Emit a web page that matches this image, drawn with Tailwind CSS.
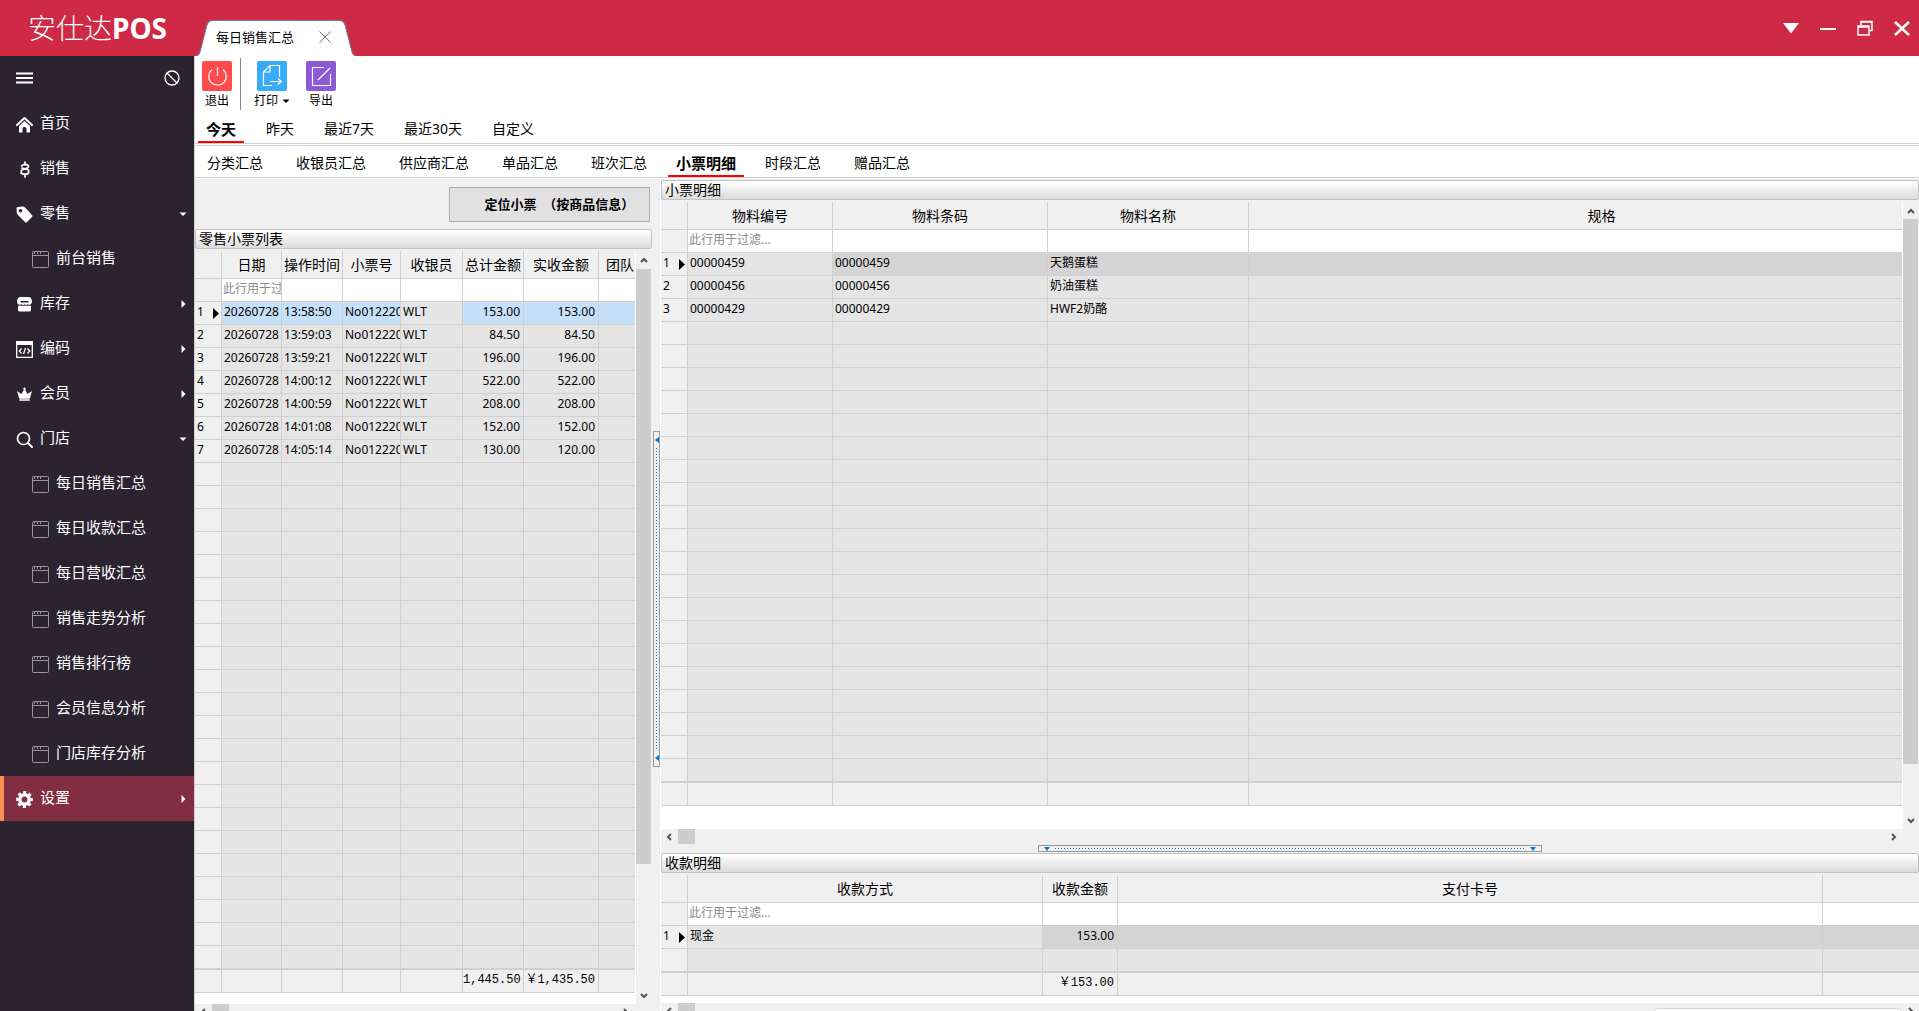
<!DOCTYPE html>
<html lang="zh-CN">
<head>
<meta charset="utf-8">
<title>安仕达POS</title>
<script src="https://cdn.jsdelivr.net/npm/@tailwindcss/browser@4"></script>
</head>
<body class="h-screen overflow-hidden flex flex-col bg-white text-black text-sm font-['Noto_Sans','Noto_Sans_CJK_SC',sans-serif]">

<svg class="hidden" aria-hidden="true">
  <symbol id="i-home" viewBox="0 0 17 17"><path d="M1 9 8.500 2 16 9" fill="none" stroke="currentColor" stroke-width="2" stroke-linecap="round" stroke-linejoin="round"/><path d="M3 10 8.500 5 14 10V16.500H10.500V12.500Q10.500 11 8.500 11T6.500 12.500V16.500H3Z" fill="currentColor"/></symbol>
  <symbol id="i-sale" viewBox="0 0 17 17"><path d="M9 1V4M9 13V16M5.500 5Q7 3.200 9.500 3.300 12.500 3.500 12.500 5.500 12.500 6.800 10 7.500L6.500 8.600Q5 9.300 5.200 10.500M6 7.200 11 8.300Q13 9 12.800 10.800 12.500 13.200 9 13.300 6.500 13.300 5 12" fill="none" stroke="currentColor" stroke-width="1.700" stroke-linecap="round"/></symbol>
  <symbol id="i-tag" viewBox="0 0 17 17"><path fill-rule="evenodd" d="M1.500 1 7 .5Q8 .5 9 1.500L16 9Q17 10 16 11L11 16Q10 17 9 16L2 9Q1 8 .8 7L.5 2.500Q.5 1 1.500 1ZM4.500 3A1.800 1.800 0 1 0 4.500 6.600 1.800 1.800 0 0 0 4.500 3Z" fill="currentColor"/></symbol>
  <symbol id="i-stock" viewBox="0 0 17 17"><path fill-rule="evenodd" d="M4 1H13Q15.500 1.500 16 5 16.300 8 14.500 8.500 12.500 9.200 11.500 8.300 10 9.500 8.500 8.300 7 9.500 5.500 8.300 4 9.200 2.500 8.500.7 8 1 5 1.500 1.500 4 1ZM4.500 5V6.500H12.500V5Z" fill="currentColor"/><path d="M2 9.800H15V14Q15 15.500 13.500 15.500H3.500Q2 15.500 2 14Z" fill="currentColor"/></symbol>
  <symbol id="i-code" viewBox="0 0 17 17"><path d="M.7 .7H16.300V16.300H.7Z" fill="none" stroke="currentColor" stroke-width="1.300"/><path d="M.5 .5H16.500V4H.5Z" fill="currentColor"/><path d="M5.500 7.500 3.300 10 5.500 12.500M11.500 7.500 13.700 10 11.500 12.500M9.500 7 7.500 13" fill="none" stroke="currentColor" stroke-width="1.300"/></symbol>
  <symbol id="i-crown" viewBox="0 0 17 17"><path d="M3 12 1 5 5.500 8 8.500 2.500 11.500 8 16 5 14 12Z" fill="currentColor"/><circle cx="8.500" cy="2.800" r="1.200" fill="currentColor"/><path d="M3.300 12H13.700V15H3.300Z" fill="#c9c9c9"/></symbol>
  <symbol id="i-search" viewBox="0 0 17 17"><circle cx="7.500" cy="7.500" r="6" fill="none" stroke="currentColor" stroke-width="1.700"/><path d="M12 12 16 16" stroke="currentColor" stroke-width="2" stroke-linecap="round"/></symbol>
  <symbol id="i-gear" viewBox="0 0 17 17"><circle cx="8.500" cy="8.500" r="4.700" fill="none" stroke="currentColor" stroke-width="3.600"/><circle cx="8.500" cy="8.500" r="7" fill="none" stroke="currentColor" stroke-width="2.800" stroke-dasharray="3 2.498" stroke-dashoffset="1.500"/></symbol>
  <symbol id="i-window" viewBox="0 0 17 17"><path d="M.5 1.500Q.5.5 1.500.5H15.500Q16.500.5 16.500 1.500V15.500Q16.500 16.500 15.500 16.500H1.500Q.5 16.500.5 15.500ZM.5 4.500H16.500M2.500 1V3M5.500 1V3M8.500 1V3" fill="none" stroke="#98949b"/></symbol>
  <symbol id="i-down" viewBox="0 0 8 8"><path d="M.5 2.500H7.500L4 6Z" fill="currentColor"/></symbol>
  <symbol id="i-right" viewBox="0 0 8 8"><path d="M2.500 0V8L6.500 4Z" fill="currentColor"/></symbol>
  <symbol id="s-up" viewBox="0 0 8 8"><path d="M1 6 4 3 7 6" fill="none" stroke="#555" stroke-width="2"/></symbol>
  <symbol id="s-down" viewBox="0 0 8 8"><path d="M1 2 4 5 7 2" fill="none" stroke="#555" stroke-width="2"/></symbol>
  <symbol id="s-left" viewBox="0 0 8 8"><path d="M6 1 3 4 6 7" fill="none" stroke="#555" stroke-width="2"/></symbol>
  <symbol id="s-right" viewBox="0 0 8 8"><path d="M2 1 5 4 2 7" fill="none" stroke="#555" stroke-width="2"/></symbol>
</svg>

<header class="h-14 shrink-0 flex bg-[#cf2a45] text-white">
  <h1 class="w-[196px] shrink-0 pl-7 flex items-center text-[28px] leading-none font-bold"><span class="font-light">安仕达</span>POS</h1>
  <div class="relative self-end w-[161px] h-9 pb-[2px] flex items-center text-black">
    <svg class="absolute inset-0 w-full h-full" viewBox="0 0 161 36"><path d="M0 36Q3 36 4 32L11 5Q12.500.5 17 .5H143Q147.500.5 149 5L156 32Q157 36 160 36Z" fill="#fff"/><path d="M0 35.500Q3 36 4 32L11 5Q12.500.5 17 .5H143Q147.500.5 149 5L156 32Q157 36 160 35.500" fill="none" stroke="#6d7f97"/></svg>
    <a href="#" class="relative pl-5 text-[13px] leading-4">每日销售汇总</a>
    <button class="relative ml-[25px] w-3 h-3" aria-label="关闭标签"><svg viewBox="0 0 12 12"><path d="M.5.5 11.500 11.500M11.500.5.500 11.500" stroke="#777" fill="none"/></svg></button>
  </div>
  <div class="ml-auto pr-[9px] flex items-center gap-[21px]">
    <button class="w-4 h-4" aria-label="菜单"><svg viewBox="0 0 16 16"><path d="M0 3H16L8 13.500Z" fill="#fff"/></svg></button>
    <button class="w-4 h-4" aria-label="最小化"><svg viewBox="0 0 16 16"><path d="M0 8H16V10H0Z" fill="#fff"/></svg></button>
    <button class="w-4 h-4" aria-label="还原"><svg viewBox="0 0 16 16"><path d="M4 5V1.500H15V10.500H12M4 2H15M1 6H12V15H1ZM1 7H12" fill="none" stroke="#fff" stroke-width="1.500"/></svg></button>
    <button class="w-4 h-4" aria-label="关闭"><svg viewBox="0 0 16 16"><path d="M1 2 15 15M15 2 1 15" stroke="#fff" stroke-width="2.500"/></svg></button>
  </div>
</header>

<div class="flex-1 min-h-0 flex">
  <aside class="w-[194px] shrink-0 bg-[#2b2330] text-white">
    <div class="h-[45px] pl-4 pr-[14px] pb-[2px] flex items-center justify-between">
      <button aria-label="折叠菜单" class="w-[17px] h-3"><svg viewBox="0 0 17 12"><path d="M0 1.500H17M0 6H17M0 10.500H17" stroke="#fff" stroke-width="2"/></svg></button>
      <button aria-label="锁定" class="w-4 h-4"><svg viewBox="0 0 16 16"><circle cx="8" cy="8" r="7" fill="none" stroke="#fff" stroke-width="1.300"/><path d="M3 3 13 13" stroke="#fff" stroke-width="1.300"/></svg></button>
    </div>
    <nav id="nav" class="text-[15px] leading-5"></nav>
  </aside>

  <main class="flex-1 min-w-0 flex flex-col overflow-hidden border-l border-[#d0d0d0] bg-white">
    <div class="h-[58px] shrink-0 pt-[2px] pl-[7px] flex text-xs leading-4">
      <button class="w-[30px] mt-[3px] flex flex-col items-center gap-[2px] self-start">
        <svg class="w-[30px] h-[30px] rounded-xs bg-[#ff4b4b]" viewBox="0 0 30 30"><path d="M15.500 6V15M10 8.500A8.800 8.800 0 1 0 21 8.500" fill="none" stroke="#fff" stroke-width="1.200"/></svg>退出</button>
      <div class="w-px h-[52px] bg-[#888] ml-2"></div>
      <button class="w-[38px] ml-3 mt-[3px] flex flex-col items-center gap-[2px] self-start">
        <svg class="w-[30px] h-[30px] rounded-xs bg-[#39abfb]" viewBox="0 0 30 30"><path d="M15 24.500H6.500V11L13 4.500H22.500V16M13 5V11H7M13 20.500H24.500M21 17.500 24.500 20.500 21 23.500" fill="none" stroke="#fff" stroke-width="1.200"/></svg>
        <span class="flex items-center gap-1">打印<svg class="w-2 h-2"><use href="#i-down"/></svg></span></button>
      <button class="w-[30px] ml-[15px] mt-[3px] flex flex-col items-center gap-[2px] self-start">
        <svg class="w-[30px] h-[30px] rounded-xs bg-[#8c5ad6]" viewBox="0 0 30 30"><path d="M18 6.500H6.500V24.500H24.500V13M12 19 24 7" fill="none" stroke="#fff" stroke-width="1.200"/></svg>导出</button>
    </div>
    <nav class="h-[30px] shrink-0 pl-[3px] flex gap-[14px] leading-[30px] border-b border-[#d0d0d0]">
      <a href="#" class="px-2 h-[29px] text-[15px] font-bold border-b-2 border-[#f00]">今天</a>
      <a href="#" class="px-2">昨天</a>
      <a href="#" class="px-2">最近7天</a>
      <a href="#" class="px-2">最近30天</a>
      <a href="#" class="px-2">自定义</a>
    </nav>
    <nav class="mt-px h-[33px] shrink-0 pl-1 flex gap-[17px] leading-[34px] border-y border-[#d0d0d0] mb-px">
      <a href="#" class="px-2">分类汇总</a>
      <a href="#" class="px-2">收银员汇总</a>
      <a href="#" class="px-2">供应商汇总</a>
      <a href="#" class="px-2">单品汇总</a>
      <a href="#" class="px-2">班次汇总</a>
      <a href="#" class="px-2 -mx-1 h-[31px] text-[15px] font-bold border-b-2 border-[#f00]">小票明细</a>
      <a href="#" class="px-2">时段汇总</a>
      <a href="#" class="px-2">赠品汇总</a>
    </nav>

    <div class="flex-1 min-h-0 flex bg-[#f0f0f0]">
      <section class="w-[457px] shrink-0 flex flex-col overflow-hidden">
        <div class="h-[50px] shrink-0 pr-[2px] pt-px flex items-center justify-end">
          <button class="w-[201px] h-[35px] pl-5 bg-[#e1e1e1] border border-[#adadad] text-[13px] font-bold whitespace-pre">定位小票  （按商品信息）</button>
        </div>
        <h2 class="h-5 shrink-0 pl-[3px] leading-[18px] border border-[#c2c2c2] rounded-xs bg-linear-to-b from-white to-[#dcdcdc]">零售小票列表</h2>
        <div class="mt-[2px] flex shrink-0">
          <div class="flex-1 min-w-0 bg-white">
            <table id="receipts" class="w-full table-fixed border-separate border-spacing-0 text-xs"></table>
            <div class="h-[11px]"></div>
          </div>
          <div class="w-[17px] pr-px border-l border-white flex flex-col items-center">
            <svg class="w-2 h-2 my-[5px] shrink-0"><use href="#s-up"/></svg>
            <div class="w-full h-[595px] bg-[#cdcdcd]"></div>
            <svg class="w-2 h-2 mt-auto mb-1 shrink-0"><use href="#s-down"/></svg>
          </div>
        </div>
        <div class="h-4 shrink-0 pl-1 pr-[22px] flex items-center">
          <svg class="w-2 h-2"><use href="#s-left"/></svg>
          <div class="w-[17px] h-full ml-[5px] bg-[#cdcdcd]"></div>
          <svg class="w-2 h-2 ml-auto"><use href="#s-right"/></svg>
        </div>
      </section>

      <div class="w-[9px] shrink-0 pl-px pt-[252px] border-r border-white">
        <div class="w-[7px] h-[336px] border border-[#999] py-1 flex flex-col items-center">
          <svg class="w-1 h-2" viewBox="0 0 4 8"><path d="M4 1V7L0 4Z" fill="#0078d7"/></svg>
          <div class="flex-1 my-1 w-px bg-[repeating-linear-gradient(#0078d7_0_1px,transparent_1px_3px)]"></div>
          <svg class="w-1 h-2" viewBox="0 0 4 8"><path d="M4 1V7L0 4Z" fill="#0078d7"/></svg>
        </div>
      </div>

      <section class="flex-1 min-w-0 pt-px flex flex-col overflow-hidden">
        <h2 class="h-5 shrink-0 pl-[3px] leading-[18px] border border-[#c2c2c2] rounded-xs bg-linear-to-b from-white to-[#dcdcdc]">小票明细</h2>
        <div class="mt-[2px] flex shrink-0">
          <div class="flex-1 min-w-0 bg-white">
            <table id="items" class="w-full table-fixed border-separate border-spacing-0 text-xs"></table>
            <div class="h-[23px]"></div>
          </div>
          <div class="w-[17px] border-l border-white pr-px flex flex-col items-center">
            <svg class="w-2 h-2 mt-[5px] mb-1 shrink-0"><use href="#s-up"/></svg>
            <div class="w-full h-[545px] bg-[#cdcdcd]"></div>
            <svg class="w-2 h-2 mt-auto mb-1 shrink-0"><use href="#s-down"/></svg>
          </div>
        </div>
        <div class="h-4 shrink-0 pl-1 pr-[21px] pb-px flex items-center">
          <svg class="w-2 h-2"><use href="#s-left"/></svg>
          <div class="w-[17px] h-[15px] ml-[5px] bg-[#cdcdcd]"></div>
          <svg class="w-2 h-2 ml-auto"><use href="#s-right"/></svg>
        </div>
        <div class="h-2 shrink-0 flex justify-center">
          <div class="w-2/5 h-[7px] border border-[#999] px-1 flex items-center">
            <svg class="w-2 h-1" viewBox="0 0 8 4"><path d="M1 0H7L4 4Z" fill="#0078d7"/></svg>
            <div class="flex-1 mx-1 h-px bg-[repeating-linear-gradient(90deg,#0078d7_0_1px,transparent_1px_3px)]"></div>
            <svg class="w-2 h-1" viewBox="0 0 8 4"><path d="M1 0H7L4 4Z" fill="#0078d7"/></svg>
          </div>
        </div>
        <h2 class="h-5 shrink-0 pl-[3px] leading-[18px] border border-[#c2c2c2] rounded-xs bg-linear-to-b from-white to-[#dcdcdc]">收款明细</h2>
        <div class="mt-[2px] shrink-0 bg-white pb-[7px]">
          <table id="payments" class="w-full table-fixed border-separate border-spacing-0 text-xs"></table>
        </div>
        <div class="h-4 shrink-0 pl-1 pr-1 flex items-center">
          <svg class="w-2 h-2"><use href="#s-left"/></svg>
          <div class="w-[17px] h-full ml-[5px] bg-[#cdcdcd]"></div>
          <div class="ml-auto mr-1 w-[250px] h-[11px] self-end rounded-t-md border border-[#d8d8d8] bg-white"></div>
          <svg class="w-2 h-2"><use href="#s-right"/></svg>
        </div>
      </section>
    </div>
  </main>
</div>

<script>
const menu = [
  ['home', '首页', ''], ['sale', '销售', ''], ['tag', '零售', 'down'], ['window', '前台销售', 'sub'],
  ['stock', '库存', 'right'], ['code', '编码', 'right'], ['crown', '会员', 'right'], ['search', '门店', 'down'],
  ['window', '每日销售汇总', 'sub'], ['window', '每日收款汇总', 'sub'], ['window', '每日营收汇总', 'sub'],
  ['window', '销售走势分析', 'sub'], ['window', '销售排行榜', 'sub'], ['window', '会员信息分析', 'sub'],
  ['window', '门店库存分析', 'sub'], ['gear', '设置', 'right']
];
document.getElementById('nav').innerHTML = menu.map(([icon, label, kind]) => {
  const row = icon === 'gear' ? 'pl-3 border-l-4 border-[#ff8f50] bg-[#822d42]' : kind === 'sub' ? 'pl-8' : 'pl-4';
  const arrow = kind === 'down' || kind === 'right'
    ? `<svg class="w-2 h-2 ml-auto mt-1"><use href="#i-${kind}"/></svg>` : '';
  return `<a href="#" class="h-[45px] pr-[7px] pb-1 flex items-center gap-[7px] ${row}"><svg class="w-[17px] h-[17px] mt-[6px]"><use href="#i-${icon}"/></svg>${label}${arrow}</a>`;
}).join('');

const line = 'border-[#d0d0d0]';
function grid(id, { cols, rows, blank, totals, selected, skip }) {
  const edge = i => i === cols.length - 1 ? '' : 'border-r';
  const n = rows.length + blank;
  const place = { '团队号': 'text-left pl-[7px]', '规格': 'text-center pl-[52px]' };
  const head = cols.map(([name], i) =>
    `<th class="h-7 bg-[#f0f0f0] border-b ${edge(i)} ${line} font-normal text-sm leading-5 overflow-hidden whitespace-nowrap ${place[name] || 'text-center'}">${name}</th>`).join('');
  const filter = cols.map(([name], i) =>
    `<td class="h-[23px] leading-4 pb-[2px] border-b ${edge(i)} ${line} ${i ? 'bg-white' : 'bg-[#f0f0f0]'}">${name ? `<input aria-label="${name}" ${i === 1 ? 'placeholder="此行用于过滤..."' : ''} class="block w-full h-4 pl-px outline-none placeholder:text-[#8a8a8a]">` : ''}</td>`).join('');
  let body = '';
  for (let r = 0; r < n; r++) {
    const last = r === n - 1;
    body += '<tr>' + cols.map(([, , align], i) => {
      const bg = i === 0 ? 'bg-[#f0f0f0]' : r === 0 && i !== skip ? selected : 'bg-[#e5e5e5]';
      const text = i === 0 ? (rows[r] ? r + 1 : '') : (rows[r] || [])[i - 1] || '';
      const mark = i === 0 && r === 0 ? '<svg class="w-[6px] h-[11px] mt-[2px]" viewBox="0 0 6 11"><path d="M0 0V11L6 5.500Z"/></svg>' : '';
      const inner = i === 0 ? `<div class="flex items-center justify-between pr-[2px]">${text}${mark}</div>` : text;
      return `<td class="${last ? 'h-6 border-b-2' : 'h-[23px] border-b'} ${edge(i)} ${line} ${bg} leading-4 pl-[2px] pb-[2px] overflow-hidden whitespace-nowrap ${align === 'r' ? 'text-right pr-[3px]' : ''}">${inner}</td>`;
    }).join('') + '</tr>';
  }
  const foot = cols.map((c, i) =>
    `<td class="h-[23px] bg-[#f0f0f0] border-b ${edge(i)} ${line} leading-4 text-right pr-[3px] pb-[3px] whitespace-nowrap font-['Liberation_Mono','Noto_Sans_CJK_SC',monospace]">${totals[i] || ''}</td>`).join('');
  document.getElementById(id).innerHTML =
    '<colgroup>' + cols.map(([, w]) => `<col ${w ? `style="width:${w}px"` : ''}>`).join('') + '</colgroup>' +
    `<thead><tr>${head}</tr></thead><tbody><tr>${filter}</tr>${body}</tbody><tfoot><tr>${foot}</tr></tfoot>`;
}

const sale = (time, total, paid) => ['20260728', time, 'No012220', 'WLT', total, paid];
grid('receipts', {
  cols: [['', 27], ['日期', 60], ['操作时间', 61], ['小票号', 58], ['收银员', 62], ['总计金额', 61, 'r'], ['实收金额', 75, 'r'], ['团队号', 0]],
  rows: [sale('13:58:50', '153.00', '153.00'), sale('13:59:03', '84.50', '84.50'), sale('13:59:21', '196.00', '196.00'),
    sale('14:00:12', '522.00', '522.00'), sale('14:00:59', '208.00', '208.00'), sale('14:01:08', '152.00', '152.00'), sale('14:05:14', '130.00', '120.00')],
  blank: 22, totals: { 5: '1,445.50', 6: '￥1,435.50' }, selected: 'bg-[#c4e1f9]', skip: 4
});
grid('items', {
  cols: [['', 27], ['物料编号', 145], ['物料条码', 215], ['物料名称', 201], ['规格', 0]],
  rows: [['00000459', '00000459', '天鹅蛋糕'], ['00000456', '00000456', '奶油蛋糕'], ['00000429', '00000429', 'HWF2奶酪']],
  blank: 20, totals: {}, selected: 'bg-[#d4d4d4]', skip: 1
});
grid('payments', {
  cols: [['', 27], ['收款方式', 355], ['收款金额', 75, 'r'], ['支付卡号', 705], ['', 0]],
  rows: [['现金', '153.00']],
  blank: 1, totals: { 2: '￥153.00' }, selected: 'bg-[#d4d4d4]', skip: 1
});
</script>
</body>
</html>
